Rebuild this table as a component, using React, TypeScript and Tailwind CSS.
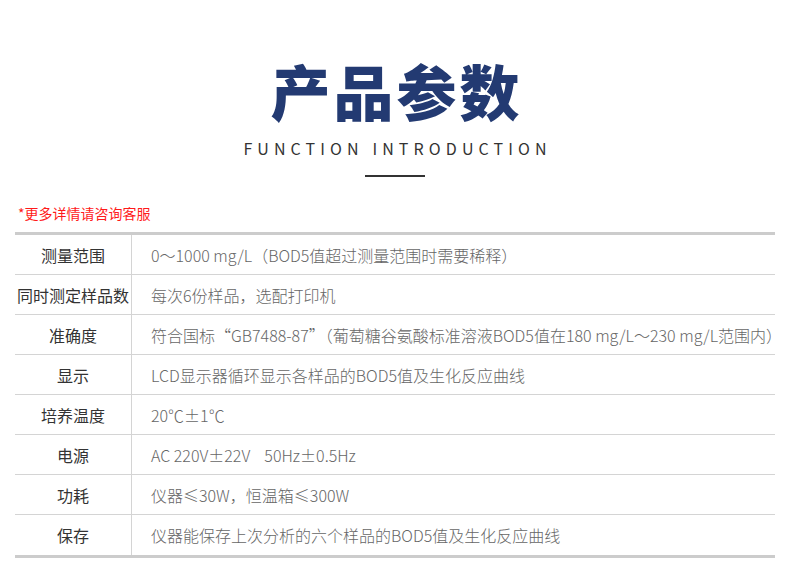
const rows: [string, string][] = [
  ["测量范围", "0～1000 mg/L（BOD5值超过测量范围时需要稀释）"],
  ["同时测定样品数", "每次6份样品，选配打印机"],
  ["准确度", "符合国标“GB7488-87”（葡萄糖谷氨酸标准溶液BOD5值在180 mg/L～230 mg/L范围内）"],
  ["显示", "LCD显示器循环显示各样品的BOD5值及生化反应曲线"],
  ["培养温度", "20℃±1℃"],
  ["电源", "AC 220V±22V\u00a0\u00a0\u00a0\u00a050Hz±0.5Hz"],
  ["功耗", "仪器≤30W，恒温箱≤300W"],
  ["保存", "仪器能保存上次分析的六个样品的BOD5值及生化反应曲线"],
]

export default function App() {
  return (
    <div className="w-[790px] h-[575px] bg-white font-['Noto_Sans_CJK_SC','Noto_Sans',sans-serif] overflow-hidden">
      <div className="pt-[60px] flex flex-col items-center">
        <h1 className="text-[60px] leading-none font-black text-[#233a72] tracking-[3px] pl-[3px]">产品参数</h1>
        <p className="mt-[20px] text-[16px] leading-none text-[#333] tracking-[5.1px] pl-[5px]">FUNCTION INTRODUCTION</p>
        <div className="mt-[19px] w-[60px] h-[2px] bg-[#333]" />
      </div>

      <p className="mt-[29px] ml-[18px] text-[14px] leading-none text-[#ff1a1a]">*更多详情请咨询客服</p>

      <div className="mt-[12px] mx-[15px] border-t-[3px] border-b-[3px] border-[#cccccc]">
        {rows.map(([label, value], i) => (
          <div
            key={label}
            className={`flex h-[40px] ${i < rows.length - 1 ? "border-b border-[#d4d4d4]" : ""}`}
          >
            <div className="w-[117px] shrink-0 border-r border-[#d4d4d4] flex items-center justify-center text-[16px] font-normal text-[#333]">
              {label}
            </div>
            <div className="flex-1 flex items-center pl-[19px] text-[16px] font-light text-[#666] whitespace-nowrap">
              {value}
            </div>
          </div>
        ))}
      </div>
    </div>
  )
}
